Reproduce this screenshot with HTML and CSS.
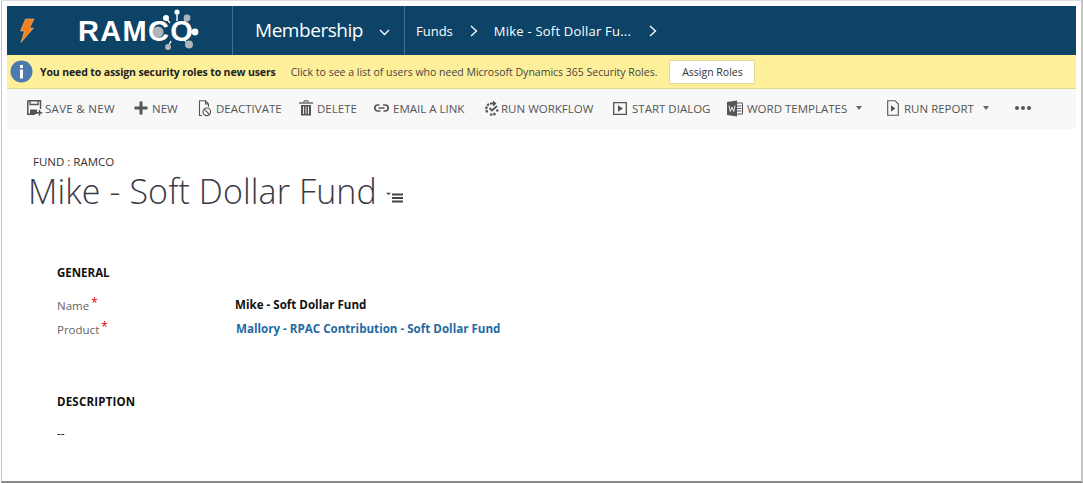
FILE: index.html
```html
<!DOCTYPE html>
<html lang="en">
<head>
<meta charset="utf-8">
<title>Mike - Soft Dollar Fund</title>
<link rel="stylesheet" href="styles.css">
</head>
<body>
<div class="window">
  <header class="nav">
    <div class="bolt-cell">
      <svg class="bolt" width="16" height="25" viewBox="0 0 16 25"><path d="M6.500 1H15L10.500 10H14.500L2 24.500L5.500 13H1.500Z" fill="#f5821f" stroke="#fdb56f" stroke-width=".6"/></svg>
    </div>
    <div class="logo-cell">
      <span class="logo-text">RAMCO</span>
      <svg class="logo-mark" width="50" height="49" viewBox="0 0 50 49">
        <g stroke="#fff" stroke-width="1.400" fill="none">
          <path d="M27 6V15M16 12L20 17M37 12L33 18M45 26H37M18 41L21 35M39 38L33 33"/>
        </g>
        <circle cx="8" cy="26" r="5.500" fill="#aeb4b9"/>
        <circle cx="27" cy="6" r="2.600" fill="#fff"/>
        <circle cx="16" cy="12" r="3" fill="#fff"/>
        <circle cx="37" cy="12" r="3.400" fill="#aeb4b9"/>
        <circle cx="45" cy="26" r="3.400" fill="#fff"/>
        <circle cx="18" cy="41" r="3" fill="#aeb4b9"/>
        <circle cx="39" cy="38.500" r="4" fill="#aeb4b9"/>
      </svg>
    </div>
    <div class="module-cell">
      <span class="module">Membership</span>
      <svg class="chev-down" width="11" height="7" viewBox="0 0 11 7"><path d="M1 1L5.500 5.500L10 1" fill="none" stroke="#fff" stroke-width="1.400"/></svg>
    </div>
    <nav class="crumbs">
      <span class="crumb">Funds</span>
      <svg class="chev-right" width="8" height="12" viewBox="0 0 8 12"><path d="M1 1L6.500 6L1 11" fill="none" stroke="#fff" stroke-width="1.300"/></svg>
      <span class="crumb crumb-record">Mike - Soft Dollar Fu...</span>
      <svg class="chev-right" width="8" height="12" viewBox="0 0 8 12"><path d="M1 1L6.500 6L1 11" fill="none" stroke="#fff" stroke-width="1.300"/></svg>
    </nav>
  </header>

  <div class="banner">
    <svg class="info" width="23" height="23" viewBox="0 0 23 23"><circle cx="11.500" cy="11.500" r="11" fill="#4a7ab0"/><rect x="10" y="9.500" width="3" height="9" fill="#fff"/><rect x="10" y="5" width="3" height="3" fill="#fff"/></svg>
    <strong class="banner-title">You need to assign security roles to new users</strong>
    <span class="banner-text">Click to see a list of users who need Microsoft Dynamics 365 Security Roles.</span>
    <button class="banner-btn">Assign Roles</button>
  </div>

  <div class="toolbar">
    <div class="tool tool-save">
      <svg width="16" height="16" viewBox="0 0 16 16"><path d="M.8 .8H13.500V9M.8 .8V14.200H8" fill="none" stroke="#555" stroke-width="1.500"/><path d="M3 9.500H10V14H3Z" fill="#555"/><path d="M3 1V4.500H11V1" fill="none" stroke="#555" stroke-width="1.300"/><path d="M12.500 10V15.500M9.800 12.800H15.200" stroke="#555" stroke-width="1.600"/></svg>
      <span class="text-save">SAVE &amp; NEW</span>
    </div>
    <div class="tool tool-new">
      <svg width="14" height="14" viewBox="0 0 14 14"><path d="M7 .5V13.500M.5 7H13.500" stroke="#555" stroke-width="3"/></svg>
      <span>NEW</span>
    </div>
    <div class="tool tool-deact">
      <svg width="14" height="17" viewBox="0 0 14 17"><path d="M4 15.500H1.500V.8H7.500L10.500 4V7M7.500 .8V4H10.500" fill="none" stroke="#555" stroke-width="1.100"/><circle cx="8.800" cy="11.800" r="3.800" fill="none" stroke="#555" stroke-width="1.200"/><path d="M6.200 9.200L11.400 14.400" stroke="#555" stroke-width="1.200"/></svg>
      <span>DEACTIVATE</span>
    </div>
    <div class="tool tool-delete">
      <svg width="14" height="16" viewBox="0 0 14 16"><path d="M0 3H14" stroke="#555" stroke-width="1.300"/><path d="M5 2.500V.8H9V2.500" fill="none" stroke="#555"/><path d="M2 5H12V15.500H2Z" fill="#555"/><path d="M4.500 6.500V14M7 6.500V14M9.500 6.500V14" stroke="#f8f8f8" stroke-width=".9"/></svg>
      <span>DELETE</span>
    </div>
    <div class="tool tool-email">
      <svg width="15" height="8" viewBox="0 0 15 8"><path d="M5.500 1H3.800A2.800 2.800 0 0 0 3.800 7H6.500M9 1H11.200A2.800 2.800 0 0 1 11.200 7H9.500M4.500 4H10.500" fill="none" stroke="#555" stroke-width="1.700"/></svg>
      <span>EMAIL A LINK</span>
    </div>
    <div class="tool tool-flow">
      <svg width="14" height="16" viewBox="0 0 14 16"><path d="M4 4A5.800 5.800 0 0 0 3 13" fill="none" stroke="#555" stroke-width="2.200" stroke-dasharray="2.500 .8"/><path d="M10.500 13.500A5.800 5.800 0 0 1 5 14.300" fill="none" stroke="#555" stroke-width="2.200" stroke-dasharray="2.500 .8"/><path d="M8 .5L11.500 3.500L8 6.500V4.500H5V2.500H8Z" fill="#555"/><path d="M4.500 8L7 10.500L12 6" fill="none" stroke="#555" stroke-width="1.800"/><circle cx="12.300" cy="10.500" r="1.300" fill="#555"/></svg>
      <span>RUN WORKFLOW</span>
    </div>
    <div class="tool tool-dialog">
      <svg width="14" height="13" viewBox="0 0 14 13"><path d="M.7 .7H13.300V12.300H.7Z" fill="none" stroke="#555" stroke-width="1.300"/><path d="M5 3.300L10 6.500L5 9.700Z" fill="#555"/></svg>
      <span class="text-dialog">START DIALOG</span>
    </div>
    <div class="tool tool-word">
      <svg width="16" height="17" viewBox="0 0 16 17"><path d="M9 3H15.500V14H9" fill="#fff" stroke="#555"/><path d="M10 6H14.500M10 8.500H14.500M10 11H14.500" stroke="#555"/><path d="M0 2L10 .5V16.500L0 15Z" fill="#555"/><path d="M2 5.500L3.300 11.500L5 7L6.700 11.500L8 5.500" fill="none" stroke="#fff" stroke-width=".9"/></svg>
      <span>WORD TEMPLATES</span>
      <i class="caret"></i>
    </div>
    <div class="tool tool-report">
      <svg width="12" height="16" viewBox="0 0 12 16"><path d="M.7 .7H8L11.300 4V15.300H.7Z" fill="none" stroke="#555" stroke-width="1.100"/><path d="M4 5.200L8.300 8.500L4 11.800Z" fill="#555"/></svg>
      <span class="text-report">RUN REPORT</span>
      <i class="caret"></i>
    </div>
    <div class="tool-more"><i></i><i></i><i></i></div>
  </div>

  <main class="content">
    <div class="entity">FUND : RAMCO</div>
    <h1 class="title">Mike - Soft Dollar Fund
      <svg class="title-menu" width="17" height="12" viewBox="0 0 17 12"><path d="M0 .8H5L2.500 3Z" fill="#444"/><path d="M6 2.500H17M6 6H17M6 9.500H17" stroke="#444" stroke-width="1.800"/></svg>
    </h1>
    <section class="section section-general">
      <h2 class="section-head">GENERAL</h2>
      <div class="field field-name">
        <span class="label">Name<b class="req">*</b></span>
        <span class="value">Mike - Soft Dollar Fund</span>
      </div>
      <div class="field field-product">
        <span class="label">Product<b class="req">*</b></span>
        <a class="value link">Mallory - RPAC Contribution - Soft Dollar Fund</a>
      </div>
    </section>
    <section class="section section-desc">
      <h2 class="section-head">DESCRIPTION</h2>
      <div class="empty">--</div>
    </section>
  </main>
</div>
</body>
</html>
```
FILE: styles.css
```css
* { box-sizing: border-box; }
html, body { margin: 0; padding: 0; background: #fff; }
body {
  width: 1083px;
  height: 484px;
  overflow: hidden;
  font-family: "Open Sans", "Noto Sans", sans-serif;
}
.window {
  width: 1082px;
  height: 483px;
  margin-left: 1px;
  padding: 5px 5px 0 5px;
  background: #fff;
  border: 1px solid #c4c4c4;
  border-bottom: 2px solid #8a8a8a;
  border-right: 2px solid #c4c4c4;
  border-top-color: #dcdcdc;
  overflow: hidden;
}
.nav {
  height: 49px;
  background: #0c4366;
  display: flex;
  align-items: stretch;
  color: #fff;
}
.bolt-cell { width: 52px; display: flex; align-items: flex-start; padding: 12px 0 0 12px; }
.logo-cell {
  width: 174px;
  border-right: 1px solid #44708d;
  display: flex;
  align-items: center;
  padding-left: 19px;
  position: relative;
}
.logo-text { font-family: "Liberation Sans", sans-serif; font-weight: 700; font-size: 29px; letter-spacing: 1.300px; line-height: 1; margin-top: 2px; white-space: nowrap; }
.logo-mark { position: absolute; left: 91px; top: 0; }
.module-cell {
  width: 172px;
  border-right: 1px solid #44708d;
  display: flex;
  align-items: center;
  padding-left: 22px;
}
.module { font-size: 19px; font-weight: 400; letter-spacing: -.45px; margin-bottom: 2px; }
.chev-down { margin-left: 16px; margin-top: 3px; }
.crumbs { display: flex; align-items: center; padding-left: 11px; }
.crumb { font-size: 13px; }
.crumbs .chev-right { margin: 1px 17px 0 17px; }
.crumbs .crumb-record { letter-spacing: .22px; margin-left: -1px; margin-right: 1px; }

.banner {
  height: 34px;
  background: #fef09a;
  border-bottom: 1px solid #dedb95;
  display: flex;
  align-items: center;
  padding-left: 3px;
  color: #333;
}
.info { flex: none; }
.banner-title { font-size: 10.500px; font-weight: 700; letter-spacing: -.12px; margin-left: 7px; color: #222; white-space: nowrap; }
.banner-text { font-size: 10.500px; margin-left: 15px; color: #444; white-space: nowrap; }
.banner-btn {
  margin-left: 12px;
  width: 86px;
  height: 24px;
  background: #fff;
  border: 1px solid #dedb95;
  font: 10.500px "Open Sans", sans-serif;
  color: #333;
  padding: 0;
}

.toolbar {
  height: 40px;
  background: #f8f8f8;
  display: flex;
  align-items: center;
  padding-left: 20px;
  padding-bottom: 2px;
  color: #555;
  font-size: 11.500px;
}
.tool { display: flex; align-items: center; gap: 4px; white-space: nowrap; flex: none; }
.tool-save { width: 107px; gap: 2px; }
.text-save { letter-spacing: .3px; }
.tool-new { width: 64px; }
.tool-deact { width: 101px; }
.tool-delete { width: 75px; }
.tool-email { width: 111px; }
.tool-flow { width: 128px; gap: 2px; }
.tool-dialog { width: 114px; }
.text-dialog { margin-left: 1px; }
.tool-word { width: 160px; }
.tool-report { width: 128px; }
.text-report { margin-left: 1px; }
.caret { width: 0; height: 0; border: 3.500px solid transparent; border-top: 4px solid #666; border-bottom: 0; margin-left: 5px; }
.tool-more { display: flex; gap: 2px; }
.tool-more i { width: 4px; height: 4px; border-radius: 50%; background: #555; }

.content { padding: 25px 0 0 21px; color: #333; }
.entity { font-size: 11.500px; line-height: 16px; margin-left: 5px; }
.title {
  margin: -1px 0 0;
  font-size: 34px;
  font-weight: 300;
  letter-spacing: .1px;
  line-height: 44px;
  color: #3a3a46;
  display: flex;
  align-items: center;
}
.title-menu { margin: 14px 0 0 9px; }
.section { margin-left: 29px; }
.section-general { margin-top: 52px; }
.section-desc { margin-top: 54px; }
.section-head { margin: 0; font-size: 11.500px; font-weight: 700; color: #111; line-height: 16px; }
.section-desc .section-head { letter-spacing: .2px; }
.field { display: flex; align-items: center; height: 24px; font-size: 11.600px; }
.field-name { margin-top: 11px; }
.label { width: 178px; color: #666; flex: none; font-size: 11.500px; position: relative; top: 1px; }
.req { color: #e00000; font-weight: 400; font-size: 12px; margin-left: 2px; position: relative; top: -3px; }
.value { font-weight: 700; color: #111; }
.link { color: #1f6aa5; margin-left: 1px; }
.empty { margin-top: 15px; font-size: 12px; color: #222; }
```
